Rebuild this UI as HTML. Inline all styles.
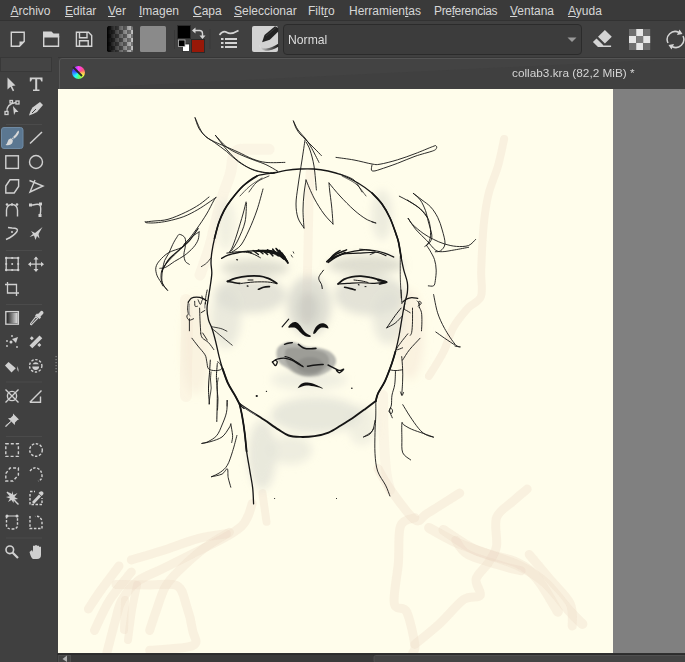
<!DOCTYPE html>
<html><head><meta charset="utf-8">
<style>
*{margin:0;padding:0;box-sizing:border-box}
html,body{width:685px;height:662px;overflow:hidden;background:#404040;font-family:"Liberation Sans",sans-serif}
.abs{position:absolute}
#menubar{left:0;top:0;width:685px;height:21px;background:#3a3a3a;border-bottom:1px solid #323232}
#menubar span{position:absolute;top:4px;font-size:12px;color:#d6d6d6;white-space:nowrap}
#menubar u{text-decoration:underline}
#toolbar{left:0;top:21px;width:685px;height:37px;background:#404040}
#toolbox{left:0;top:58px;width:57px;height:604px;background:#404040}
#tabbar{left:57px;top:58px;width:628px;height:31px;background:#404040}
#canvasbg{left:58px;top:89px;width:627px;height:564px;background:#808080}
#canvas{left:58px;top:89px;width:555px;height:564px;background:#fffdeb}
#bottom{left:57px;top:653px;width:628px;height:9px;background:#353535}
svg.draw{position:absolute;left:0;top:0}
#title{left:512px;top:66px;font-size:11.8px;color:#d4d4d4;white-space:nowrap}
#combo{left:288px;top:33px;font-size:12.2px;color:#dcdcdc}
#kicon{left:71.5px;top:65.5px;width:13px;height:13px;border-radius:50%;background:conic-gradient(from 0deg,#ff40ff,#ff5080 60deg,#ffff40 120deg,#60ff60 170deg,#20ffff 220deg,#4040ff 290deg,#ff40ff)}
</style></head><body>
<div id="menubar" class="abs">
<span style="left:10.5px"><u>A</u>rchivo</span>
<span style="left:65px"><u>E</u>ditar</span>
<span style="left:108px"><u>V</u>er</span>
<span style="left:139px"><u>I</u>magen</span>
<span style="left:193px"><u>C</u>apa</span>
<span style="left:234px"><u>S</u>eleccionar</span>
<span style="left:308px">Filt<u>r</u>o</span>
<span style="left:349px">Herramien<u>t</u>as</span>
<span style="left:434px;letter-spacing:-0.35px">Pre<u>f</u>erencias</span>
<span style="left:510px"><u>V</u>entana</span>
<span style="left:568px"><u>A</u>yuda</span>
</div>
<div id="toolbar" class="abs"></div>
<div id="toolbox" class="abs"></div>
<div id="tabbar" class="abs"></div>
<div id="canvasbg" class="abs"></div>
<div id="canvas" class="abs"></div>
<svg class="draw" width="685" height="662" viewBox="0 0 685 662">
<defs>
<clipPath id="cc"><rect x="58" y="89" width="555" height="564"/></clipPath>
<filter id="bl" x="-50%" y="-50%" width="200%" height="200%"><feGaussianBlur stdDeviation="4"/></filter>
<filter id="bl2" x="-50%" y="-50%" width="200%" height="200%"><feGaussianBlur stdDeviation="0.8"/></filter>
<filter id="bl3" x="-10%" y="-10%" width="120%" height="120%"><feGaussianBlur stdDeviation="0.7"/></filter>
<filter id="bl4" x="-20%" y="-20%" width="140%" height="140%"><feGaussianBlur stdDeviation="1.1"/></filter>
</defs>
<g clip-path="url(#cc)">
<g fill="none" stroke-linecap="round" stroke-linejoin="round" filter="url(#bl3)">
<path d="M252.2,503.4C251.5,505.5 249.8,512.2 248.0,516.0C246.2,519.8 245.8,522.4 241.7,526.1C237.6,529.8 231.5,533.8 223.3,538.4C215.1,543.0 202.8,548.6 192.6,553.7C182.4,558.8 171.2,564.4 162.0,569.0C152.8,573.6 144.1,576.2 137.4,581.3C130.8,586.4 125.7,593.6 122.1,599.7C118.5,605.8 118.5,609.2 116.0,618.1C113.5,627.0 108.3,647.2 106.8,653.0" stroke="#e9cfbf" stroke-width="9" opacity="0.26"/>
<path d="M131.3,559.9C136.4,558.4 150.8,554.3 162.0,550.7C173.2,547.1 188.1,541.2 198.8,538.4C209.5,535.6 221.7,534.6 226.3,533.8" stroke="#e9cfbf" stroke-width="9" opacity="0.26"/>
<path d="M119.0,566.0C116.0,570.1 105.8,583.4 100.7,590.5C95.6,597.6 90.5,605.8 88.4,608.9" stroke="#e9cfbf" stroke-width="9" opacity="0.26"/>
<path d="M131.3,572.1C127.7,576.7 116.0,590.0 109.9,599.7C103.8,609.4 97.1,625.3 94.5,630.4" stroke="#e9cfbf" stroke-width="9" opacity="0.26"/>
<path d="M125.0,600.0L124.0,630.0" stroke="#e9cfbf" stroke-width="8" opacity="0.26"/>
<path d="M116.0,584.4C121.7,584.5 139.8,584.8 150.0,585.0C160.2,585.2 171.2,582.4 177.3,585.9C183.4,589.4 183.9,598.4 186.5,605.8C189.1,613.2 191.6,623.8 192.6,630.4C193.6,637.0 199.8,642.4 192.6,645.7C185.4,649.0 156.8,649.5 149.7,650.3" stroke="#e9cfbf" stroke-width="9" opacity="0.26"/>
<path d="M229.4,532.3C225.3,534.8 213.6,541.0 204.9,547.6C196.2,554.2 184.0,565.5 177.3,572.1C170.7,578.7 168.6,580.8 165.0,587.4C161.4,594.0 158.4,604.8 155.8,612.0C153.2,619.2 150.7,627.3 149.7,630.4" stroke="#e9cfbf" stroke-width="9" opacity="0.26"/>
<path d="M137.0,585.0C136.2,589.2 133.5,600.8 132.0,610.0C130.5,619.2 128.7,635.0 128.0,640.0" stroke="#e9cfbf" stroke-width="8" opacity="0.26"/>
<path d="M262.4,493.1L266.5,521.8" stroke="#e9cfbf" stroke-width="8" opacity="0.26"/>
<path d="M378.0,468.6C380.0,472.0 384.1,480.6 390.2,489.1C396.3,497.6 408.7,515.6 414.8,519.7C420.9,523.8 419.5,518.0 427.0,513.6C434.5,509.2 454.2,496.5 459.7,493.1" stroke="#e9cfbf" stroke-width="9" opacity="0.26"/>
<path d="M414.8,517.7C412.4,519.1 403.2,518.4 400.5,525.9C397.8,533.4 399.4,549.8 398.4,562.7C397.4,575.6 392.9,595.3 394.3,603.5C395.7,611.7 403.2,604.9 406.6,611.7C410.0,618.5 413.8,637.5 414.8,644.4C415.8,651.3 413.1,651.6 412.7,653.0" stroke="#e9cfbf" stroke-width="9" opacity="0.26"/>
<path d="M414.8,644.4C418.9,641.0 431.1,631.5 439.3,624.0C447.5,616.5 457.0,604.2 463.8,599.4C470.6,594.6 478.1,598.8 480.2,595.4C482.2,592.0 474.7,584.5 476.1,579.0C477.5,573.5 485.0,568.2 488.4,562.7C491.8,557.2 495.1,553.8 496.5,546.3C497.9,538.8 493.8,525.2 496.5,517.7C499.2,510.2 507.8,506.1 512.9,501.3C518.0,496.5 524.8,491.1 527.2,489.1" stroke="#e9cfbf" stroke-width="9" opacity="0.26"/>
<path d="M429.1,527.9C433.5,530.3 445.8,537.8 455.7,542.2C465.6,546.6 477.5,550.4 488.4,554.5C499.3,558.6 511.6,561.9 521.1,566.7C530.6,571.5 537.4,575.6 545.6,583.1C553.8,590.6 564.0,604.9 570.1,611.7C576.2,618.5 580.4,622.0 582.4,624.0" stroke="#e9cfbf" stroke-width="10" opacity="0.26"/>
<path d="M443.4,530.0C448.8,533.4 463.8,544.9 476.1,550.4C488.4,555.9 506.8,557.9 517.0,562.7C527.2,567.5 530.6,570.8 537.4,579.0C544.2,587.2 554.5,606.2 557.9,611.7" stroke="#e9cfbf" stroke-width="10" opacity="0.26"/>
<path d="M529.2,554.5C532.6,558.6 542.9,570.8 549.7,579.0C556.5,587.2 566.4,595.7 570.1,603.5C573.9,611.3 571.9,622.2 572.2,626.0" stroke="#e9cfbf" stroke-width="9" opacity="0.26"/>
<path d="M455.7,540.2C457.7,542.6 459.7,550.1 467.9,554.5C476.1,558.9 495.8,564.0 504.7,566.7C513.6,569.4 518.4,570.1 521.1,570.8" stroke="#e9cfbf" stroke-width="9" opacity="0.26"/>
<path d="M269.1,149.3C266.3,149.3 257.8,148.9 252.2,149.3C246.6,149.7 238.9,147.8 235.3,151.8C231.7,155.8 232.6,165.8 230.4,173.5C228.2,181.2 224.4,189.6 222.0,197.7C219.6,205.8 217.9,213.8 215.9,221.8C213.9,229.9 212.6,237.1 209.9,246.0C207.2,254.9 201.7,270.2 200.0,275.0" stroke="#e9cfbf" stroke-width="11" opacity="0.16"/>
<path d="M186.0,300.0C186.2,305.0 187.0,318.3 187.0,330.0C187.0,341.7 186.2,359.0 186.0,370.0C185.8,381.0 186.0,391.7 186.0,396.0" stroke="#e9cfbf" stroke-width="12" opacity="0.14"/>
<path d="M310.2,172.0C310.0,176.7 309.4,187.0 309.0,200.0C308.6,213.0 308.3,235.0 308.0,250.0C307.7,265.0 307.3,278.3 307.0,290.0C306.7,301.7 306.2,315.0 306.0,320.0" stroke="#e9cfbf" stroke-width="9" opacity="0.18"/>
<path d="M504.1,139.0C503.1,143.4 500.7,156.3 498.1,165.6C495.5,174.9 490.8,184.5 488.4,194.6C486.0,204.7 484.8,213.4 483.6,226.0C482.4,238.6 481.6,258.3 481.2,270.0C480.8,281.7 483.2,289.9 481.0,296.3C478.8,302.7 472.3,303.1 467.7,308.3C463.1,313.5 457.2,320.4 453.2,327.7C449.2,334.9 447.5,343.8 443.5,351.8C439.5,359.9 431.4,372.0 429.0,376.0" stroke="#e9cfbf" stroke-width="8" opacity="0.26"/>
<path d="M383.0,395.0C383.1,400.8 383.0,417.5 383.5,430.0C384.0,442.5 384.9,460.0 386.0,470.0C387.1,480.0 389.3,486.7 390.0,490.0" stroke="#e9cfbf" stroke-width="10" opacity="0.16"/>
</g>
<g>
<g filter="url(#bl)">
<ellipse cx="410" cy="335" rx="14" ry="45" fill="#f0ddc8" opacity="0.35"/>
<ellipse cx="196" cy="345" rx="14" ry="50" fill="#f0ddc8" opacity="0.3"/>
<ellipse cx="255" cy="268" rx="34" ry="9" fill="#c9c9c0" opacity="0.6"/>
<ellipse cx="366" cy="265" rx="38" ry="10" fill="#c9c9c0" opacity="0.6"/>
<ellipse cx="250" cy="295" rx="36" ry="18" fill="#d6d6cc" opacity="0.65"/>
<ellipse cx="370" cy="295" rx="36" ry="20" fill="#d6d6cc" opacity="0.65"/>
<ellipse cx="226" cy="318" rx="15" ry="30" fill="#deded4" opacity="0.6"/>
<ellipse cx="388" cy="318" rx="15" ry="26" fill="#deded4" opacity="0.6"/>
<ellipse cx="309" cy="306" rx="22" ry="30" fill="#d3d3ca" opacity="0.7"/>
<ellipse cx="308" cy="308" rx="10" ry="16" fill="#c4c4bc" opacity="0.6"/>
<ellipse cx="316" cy="415" rx="45" ry="18" fill="#e2e2d7" opacity="0.8"/>
<ellipse cx="309" cy="380" rx="38" ry="10" fill="#e6e6da" opacity="0.6"/>
<ellipse cx="382" cy="215" rx="10" ry="25" fill="#deded4" opacity="0.55"/>
<ellipse cx="226" cy="225" rx="9" ry="25" fill="#e4e4d8" opacity="0.5"/>
<ellipse cx="262" cy="455" rx="14" ry="35" fill="#e0e0d5" opacity="0.7"/>
<ellipse cx="290" cy="450" rx="22" ry="14" fill="#e2e2d7" opacity="0.6"/>
<ellipse cx="362" cy="425" rx="14" ry="20" fill="#e4e4d8" opacity="0.5"/>
</g>
<g filter="url(#bl2)">
<ellipse cx="254" cy="281" rx="20" ry="3" fill="#f8f4e4" opacity="0.8"/>
<ellipse cx="362" cy="281" rx="20" ry="3" fill="#f8f4e4" opacity="0.8"/>
</g>
<g filter="url(#bl4)">
<path d="M276.6,355.9C276.2,353.5 276.4,350.6 277.3,348.7C278.2,346.8 279.9,345.5 282.1,344.4C284.3,343.3 287.7,342.1 290.5,342.0C293.3,341.9 296.4,343.0 299.0,343.8C301.6,344.6 303.5,346.3 306.3,346.9C309.1,347.5 312.9,347.1 315.9,347.5C318.9,347.9 321.8,348.4 324.4,349.3C327.0,350.2 329.7,351.3 331.6,352.9C333.5,354.5 335.4,356.8 335.9,358.9C336.4,361.0 336.0,363.5 334.7,365.6C333.4,367.7 330.7,369.9 328.0,371.6C325.3,373.3 321.9,375.1 318.3,375.9C314.7,376.7 310.1,376.9 306.3,376.5C302.5,376.1 298.6,374.8 295.4,373.4C292.2,372.0 289.5,369.7 286.9,368.0C284.3,366.3 281.4,365.2 279.7,363.2C278.0,361.2 277.0,358.3 276.6,355.9Z" fill="#b6b6af"/>
<path d="M285.7,349.9C287.1,347.7 290.8,347.7 294.2,347.5C297.6,347.3 302.3,348.2 306.3,348.7C310.3,349.2 315.1,349.7 318.3,350.5C321.5,351.3 323.8,352.0 325.6,353.5C327.4,355.0 329.0,357.3 329.2,359.5C329.4,361.7 328.6,364.5 326.8,366.8C325.0,369.1 321.5,371.9 318.3,373.4C315.1,374.9 310.9,375.9 307.5,375.9C304.1,375.9 300.6,374.7 297.8,373.4C295.0,372.1 292.5,370.1 290.5,368.0C288.5,365.9 286.5,363.8 285.7,360.8C284.9,357.8 284.3,352.1 285.7,349.9Z" fill="#9d9d97"/>
<ellipse cx="310" cy="365" rx="13" ry="8" fill="#8f8f8a"/>
</g>

</g>
<g fill="none" stroke="#151515" stroke-linecap="round" stroke-linejoin="round">
<path d="M195.1,117.8C195.7,119.5 197.0,124.9 198.8,128.1C200.6,131.3 203.4,134.5 206.1,136.8C208.8,139.1 211.7,140.3 214.8,141.9C218.0,143.5 221.1,144.6 225.0,146.3C228.9,148.0 233.6,150.0 238.2,152.1C242.8,154.2 248.2,157.3 252.8,159.0C257.4,160.7 260.5,161.8 265.9,162.4C271.2,163.0 281.7,162.4 284.9,162.4" stroke-width="0.9"/>
<path d="M195.1,117.8C196.4,120.5 199.8,129.8 203.1,133.9C206.4,138.1 210.9,139.8 214.8,142.7C218.7,145.6 222.6,148.2 226.5,151.4C230.4,154.6 234.1,158.7 238.2,161.6C242.3,164.5 246.7,167.1 251.3,168.9C255.9,170.7 261.5,172.1 265.9,172.6C270.3,173.1 275.7,172.2 277.6,172.1" stroke-width="0.9"/>
<path d="M215.5,135.4C217.3,137.3 222.5,143.8 226.5,147.0C230.5,150.2 235.0,152.1 239.6,154.3C244.2,156.5 249.8,158.5 254.2,160.2C258.6,161.9 262.0,162.8 265.9,164.6C269.8,166.4 275.7,170.0 277.6,171.1" stroke-width="0.9"/>
<path d="M215.5,135.4C216.6,136.8 219.5,140.9 222.1,144.1C224.7,147.2 227.7,151.1 230.9,154.3C234.1,157.5 237.2,160.4 241.1,163.1C245.0,165.8 249.6,168.7 254.2,170.4C258.8,172.1 266.4,172.8 268.8,173.3" stroke-width="0.9"/>
<path d="M145.3,221.9C146.8,221.8 150.2,221.4 154.0,221.0C157.8,220.6 162.8,220.8 168.0,219.3C173.2,217.9 180.2,214.8 185.5,212.3C190.8,209.8 195.7,207.0 199.6,204.4C203.5,201.8 207.4,198.2 209.0,197.0" stroke-width="0.9"/>
<path d="M145.3,221.9C145.6,222.1 145.2,222.7 147.0,222.8C148.8,223.0 152.3,223.1 155.8,222.8C159.3,222.5 163.3,222.0 168.0,221.0C172.7,220.0 178.8,218.5 183.8,216.6C188.8,214.7 193.8,211.9 197.8,209.6C201.8,207.3 205.0,205.0 208.0,203.0C211.0,201.0 214.7,198.3 216.0,197.4" stroke-width="0.9"/>
<path d="M216.0,197.4C215.6,198.0 215.2,198.1 213.6,200.9C212.0,203.7 209.5,209.2 206.6,214.0C203.7,218.8 199.8,224.6 196.0,229.8C192.2,235.1 187.9,240.8 183.8,245.5C179.7,250.2 175.0,254.0 171.5,257.8C168.0,261.6 164.6,265.1 162.8,268.3C161.1,271.5 161.0,274.5 161.0,277.1C161.0,279.7 161.8,281.9 162.8,284.1C163.8,286.3 166.5,289.2 167.2,290.2" stroke-width="0.9"/>
<path d="M189.3,264.3C188.7,263.8 186.3,263.0 185.4,261.4C184.5,259.8 183.9,257.1 183.9,254.5C183.9,251.9 185.2,248.5 185.4,245.7C185.6,242.9 185.9,239.7 184.9,237.8C183.9,235.9 180.9,234.4 179.5,234.4C178.1,234.4 177.7,236.1 176.5,237.8C175.3,239.5 173.9,242.1 172.6,244.7C171.3,247.3 170.0,250.9 168.7,253.5C167.4,256.1 165.7,257.9 164.7,260.4C163.7,262.9 163.3,265.5 162.8,268.3C162.3,271.1 161.8,274.5 161.8,277.1C161.8,279.7 161.8,281.8 162.8,284.0C163.8,286.2 166.9,289.3 167.7,290.4" stroke-width="0.9"/>
<path d="M199.1,231.9C198.9,233.2 199.1,237.2 198.1,239.8C197.1,242.4 195.5,245.0 193.2,247.6C190.9,250.2 187.5,253.2 184.4,255.5C181.3,257.8 177.7,259.4 174.6,261.4C171.5,263.4 168.2,266.1 165.7,267.3C163.2,268.5 160.8,268.1 159.8,268.3" stroke-width="0.9"/>
<path d="M198.1,228.5C196.6,230.6 192.4,237.3 189.3,240.8C186.2,244.3 182.8,246.7 179.5,249.6C176.2,252.5 172.2,255.6 169.6,258.5C167.0,261.4 165.1,265.1 163.8,267.3C162.5,269.6 162.3,271.2 162.0,272.0" stroke-width="1.2"/>
<path d="M199.1,231.9C198.1,232.6 195.3,234.2 193.0,236.0C190.7,237.8 186.9,241.1 185.0,243.0C183.1,244.9 184.1,246.0 181.4,247.6C178.7,249.2 172.3,250.5 168.7,252.6C165.1,254.7 161.9,257.9 159.8,260.4C157.7,262.8 156.4,264.8 155.9,267.3C155.4,269.8 156.1,272.8 156.9,275.2C157.7,277.6 159.8,280.2 160.8,282.0C161.8,283.8 162.6,285.3 163.0,286.0" stroke-width="0.9"/>
<path d="M274.0,173.0C271.2,173.5 262.2,173.8 257.0,176.0C251.8,178.2 247.3,182.0 243.0,186.0C238.7,190.0 234.2,195.9 231.0,200.0C227.8,204.1 226.1,206.7 224.1,210.5C222.1,214.3 220.4,218.1 218.8,222.8C217.2,227.5 215.7,233.5 214.5,238.5C213.3,243.5 212.4,248.5 211.8,252.6C211.2,256.7 211.0,259.6 211.0,263.1C211.0,266.6 212.0,269.5 211.8,273.6C211.6,277.7 210.6,283.5 210.0,287.6C209.4,291.7 208.8,294.5 208.3,298.1C207.8,301.7 207.0,305.4 207.0,309.0C207.0,312.6 207.7,316.6 208.5,319.8C209.3,323.1 210.8,325.0 212.0,328.5C213.2,332.0 214.3,336.1 215.5,340.8C216.7,345.5 217.9,351.9 219.1,356.6C220.3,361.3 221.1,364.4 222.6,368.8C224.1,373.2 225.8,378.5 227.8,382.9C229.8,387.3 232.8,391.6 234.8,395.1C236.8,398.6 238.8,402.5 239.6,404.0" stroke-width="1.3"/>
<path d="M274.0,173.0C276.0,172.6 281.7,171.1 286.0,170.4C290.3,169.7 295.3,169.2 300.0,169.0C304.7,168.8 309.3,168.7 314.0,169.0C318.7,169.3 323.3,170.0 328.0,171.0C332.7,172.0 337.0,173.0 342.0,175.0C347.0,177.0 353.0,180.0 358.0,183.0C363.0,186.0 368.0,189.5 372.0,193.0C376.0,196.5 379.0,199.8 382.0,204.0C385.0,208.2 387.7,213.0 390.0,218.0C392.3,223.0 394.6,230.0 396.0,234.0C397.4,238.0 397.6,238.0 398.5,242.0C399.4,246.0 400.3,253.1 401.2,257.8C402.1,262.5 402.8,266.0 403.8,270.1C404.8,274.2 406.7,278.5 407.3,282.3C407.9,286.1 407.7,289.4 407.3,292.9C406.9,296.4 405.6,298.9 404.7,303.4C403.8,307.9 402.6,314.4 401.7,319.8C400.8,325.2 400.1,330.2 399.1,335.5C398.1,340.8 396.8,346.3 395.5,351.3C394.2,356.3 392.9,360.3 391.2,365.3C389.4,370.3 387.2,376.4 385.0,381.1C382.8,385.8 379.5,390.1 378.0,393.4C376.5,396.7 376.2,399.7 375.8,401.0" stroke-width="1.3"/>
<path d="M269.0,176.0C267.0,177.0 260.3,179.3 257.0,182.0C253.7,184.7 250.3,190.3 249.0,192.0" stroke-width="0.8"/>
<path d="M257.0,176.0C254.7,177.7 247.3,182.0 243.0,186.0C238.7,190.0 234.2,195.9 231.0,200.0C227.8,204.1 226.1,206.7 224.1,210.5C222.1,214.3 220.4,218.1 218.8,222.8C217.2,227.5 215.2,235.9 214.5,238.5" stroke-width="1.7"/>
<path d="M372.0,193.0C373.7,194.8 379.0,199.8 382.0,204.0C385.0,208.2 387.7,213.0 390.0,218.0C392.3,223.0 394.6,230.0 396.0,234.0C397.4,238.0 397.6,238.0 398.5,242.0C399.4,246.0 400.8,255.2 401.2,257.8" stroke-width="1.7"/>
<path d="M262.0,178.0C260.0,179.3 253.7,183.0 250.0,186.0C246.3,189.0 241.7,194.3 240.0,196.0" stroke-width="0.7"/>
<path d="M340.0,174.0C342.3,175.0 350.3,177.0 354.0,180.0C357.7,183.0 360.7,190.0 362.0,192.0" stroke-width="0.8"/>
<path d="M342.0,176.0C344.3,177.3 352.0,180.7 356.0,184.0C360.0,187.3 364.3,194.0 366.0,196.0" stroke-width="0.7"/>
<path d="M400.3,256.0C400.3,259.5 400.2,270.1 400.3,277.1C400.4,284.1 401.1,294.6 401.2,298.1" stroke-width="0.8"/>
<path d="M246.0,202.0C245.5,204.0 244.5,208.7 243.0,214.0C241.5,219.3 238.8,228.3 237.0,234.0C235.2,239.7 233.3,245.0 232.0,248.0C230.7,251.0 229.5,251.3 229.0,252.0" stroke-width="0.9"/>
<path d="M246.5,203.0C246.2,206.2 246.4,215.8 245.0,222.0C243.6,228.2 240.2,235.3 238.0,240.0C235.8,244.7 233.3,248.0 232.0,250.0C230.7,252.0 230.3,251.7 230.0,252.0" stroke-width="0.9"/>
<path d="M263.0,189.0C262.0,192.5 259.3,203.2 257.0,210.0C254.7,216.8 251.7,224.2 249.0,230.0C246.3,235.8 243.8,241.3 241.0,245.0C238.2,248.7 233.5,250.8 232.0,252.0" stroke-width="0.9"/>
<path d="M201.3,266.6C202.2,266.0 205.0,264.6 206.6,263.1C208.2,261.6 210.3,258.7 211.0,257.8" stroke-width="0.8"/>
<path d="M293.4,121.0C293.8,122.2 294.9,125.8 296.0,128.0C297.1,130.2 298.3,132.0 300.0,134.0C301.7,136.0 303.7,137.7 306.0,140.0C308.3,142.3 311.4,145.4 314.0,148.0C316.6,150.6 320.2,154.3 321.4,155.6" stroke-width="0.9"/>
<path d="M293.4,121.0C294.2,122.5 296.1,127.2 298.0,130.0C299.9,132.8 302.8,135.2 305.0,138.0C307.2,140.8 308.7,142.9 311.0,147.0C313.3,151.1 317.7,159.8 319.0,162.4" stroke-width="0.9"/>
<path d="M305.0,140.0C304.5,143.3 303.2,152.3 302.0,160.0C300.8,167.7 299.0,178.7 298.0,186.0C297.0,193.3 296.0,198.7 296.0,204.0C296.0,209.3 296.7,214.0 298.0,218.0C299.3,222.0 303.0,226.3 304.0,228.0" stroke-width="0.9"/>
<path d="M306.0,142.0C306.7,143.3 308.7,146.0 310.0,150.0C311.3,154.0 312.9,159.3 314.0,166.0C315.1,172.7 316.0,186.0 316.4,190.0" stroke-width="0.9"/>
<path d="M304.0,228.0C303.8,225.0 303.0,215.7 303.0,210.0C303.0,204.3 303.5,199.0 304.0,194.0C304.5,189.0 305.7,182.3 306.0,180.0" stroke-width="0.9"/>
<path d="M306.0,180.0C307.3,183.0 311.0,192.3 314.0,198.0C317.0,203.7 320.8,209.7 324.0,214.0C327.2,218.3 331.5,222.3 333.0,224.0" stroke-width="0.9"/>
<path d="M333.0,224.0C332.8,221.0 332.2,211.7 331.6,206.0C331.0,200.3 330.0,193.8 329.6,190.0C329.2,186.2 329.1,184.2 329.0,183.0" stroke-width="0.9"/>
<path d="M329.0,183.0C330.8,185.2 335.8,191.5 340.0,196.0C344.2,200.5 349.7,206.2 354.0,210.0C358.3,213.8 362.3,216.8 366.0,219.0C369.7,221.2 375.0,222.5 376.0,223.0C377.0,223.5 372.7,222.2 372.0,222.0" stroke-width="0.9"/>
<path d="M336.0,157.4C339.0,157.8 348.0,158.9 354.0,160.0C360.0,161.1 367.7,163.3 372.0,164.0C376.3,164.7 375.8,164.9 380.0,164.2C384.2,163.5 391.7,161.6 397.5,159.8C403.3,158.1 409.1,155.9 415.0,153.7C420.9,151.5 429.1,147.9 432.6,146.6C436.1,145.3 435.4,145.5 436.0,145.8C436.6,146.1 437.0,147.5 436.4,148.4C435.8,149.3 436.2,149.7 432.6,151.0C429.0,152.3 420.9,154.2 415.0,156.3C409.1,158.4 403.3,161.1 397.5,163.3C391.7,165.5 383.9,168.1 380.0,169.4C376.1,170.7 375.4,170.9 374.0,171.0C372.6,171.1 371.7,171.0 371.4,170.0C371.1,169.0 371.9,165.8 372.0,165.0" stroke-width="0.9"/>
<path d="M407.3,200.0C409.1,201.2 414.6,204.4 417.8,207.0C421.0,209.6 424.6,212.6 426.6,215.8C428.7,219.0 429.5,222.5 430.1,226.3C430.7,230.1 430.7,235.3 430.1,238.5C429.5,241.7 427.2,244.3 426.6,245.5" stroke-width="0.9"/>
<path d="M413.3,193.4C414.5,194.5 418.3,197.1 420.3,200.0C422.3,202.9 424.2,207.1 425.5,210.6C426.8,214.1 427.1,217.0 428.2,221.1C429.2,225.2 431.5,231.5 431.8,235.0C432.1,238.5 431.3,240.1 430.1,242.0C428.9,243.9 425.7,245.7 424.8,246.4" stroke-width="0.9"/>
<path d="M413.3,193.4C414.8,194.5 419.1,197.7 422.0,200.0C424.9,202.3 428.2,204.2 430.8,207.1C433.4,210.0 435.9,213.8 437.8,217.6C439.7,221.4 441.0,225.5 442.2,229.9C443.4,234.3 445.3,240.3 445.0,243.8C444.7,247.3 442.2,249.5 440.6,250.8C439.0,252.1 436.2,251.5 435.3,251.7" stroke-width="0.9"/>
<path d="M399.3,196.2C401.1,197.1 406.3,199.7 409.8,201.8C413.3,203.9 417.4,206.2 420.3,208.8C423.2,211.4 426.1,216.1 427.3,217.6" stroke-width="0.9"/>
<path d="M408.2,218.4C408.9,219.4 410.1,222.0 412.6,224.5C415.1,227.0 419.6,230.8 423.1,233.3C426.6,235.8 430.1,237.7 433.6,239.4C437.1,241.2 440.3,242.6 444.1,243.8C447.9,245.0 452.3,246.1 456.4,246.4C460.5,246.7 465.4,246.7 468.6,245.5C471.8,244.3 474.4,240.4 475.6,239.4" stroke-width="0.9"/>
<path d="M408.2,218.4C409.5,220.3 413.0,226.2 416.1,229.8C419.2,233.5 423.4,237.0 426.6,240.3C429.8,243.7 432.7,248.0 435.3,249.9C437.9,251.8 439.1,251.7 442.3,251.7C445.5,251.7 450.2,250.6 454.6,249.9C459.0,249.2 466.3,247.7 468.6,247.3" stroke-width="0.9"/>
<path d="M426.6,245.5C427.2,246.4 428.8,248.5 430.1,250.8C431.4,253.2 433.5,256.4 434.5,259.6C435.5,262.8 436.1,266.6 436.2,270.1C436.3,273.6 435.7,278.0 435.3,280.6C434.9,283.2 434.8,284.9 433.6,285.8C432.4,286.7 429.2,285.8 428.3,285.8" stroke-width="0.9"/>
<path d="M433.6,294.6C434.3,297.6 435.8,307.2 437.6,312.8C439.4,318.4 441.7,323.2 444.6,328.5C447.5,333.8 452.5,341.2 455.1,344.3C457.7,347.4 460.4,346.6 460.4,346.9C460.4,347.2 456.0,346.2 455.1,346.1" stroke-width="0.9"/>
<path d="M435.8,332.0C437.3,333.0 441.4,336.0 444.6,338.2C447.8,340.4 453.4,344.0 455.1,345.2" stroke-width="0.9"/>
<path d="M221.6,258.4C222.7,257.8 225.3,256.1 228.1,255.1C230.9,254.1 235.1,253.2 238.6,252.5C242.1,251.8 245.7,251.5 249.2,251.2C252.7,250.9 256.6,250.6 259.7,250.5C262.8,250.4 265.0,250.3 267.6,250.5C270.2,250.7 272.8,250.9 275.4,251.8C278.0,252.7 281.2,254.1 283.3,255.8C285.4,257.6 287.1,261.2 287.9,262.3" stroke-width="1.3"/>
<path d="M226.8,253.1C228.6,252.9 233.8,251.9 237.3,251.8C240.8,251.7 245.0,252.1 247.8,252.5C250.7,252.9 252.3,253.6 254.4,254.5C256.5,255.4 259.3,257.2 260.3,257.7" stroke-width="1.0"/>
<path d="M263.0,250.5L267.6,254.5" stroke-width="1.6"/>
<path d="M267.6,249.9L272.8,255.8" stroke-width="1.6"/>
<path d="M272.8,249.2L278.1,255.8" stroke-width="1.6"/>
<path d="M276.1,248.5L283.3,258.4" stroke-width="1.6"/>
<path d="M279.4,250.5L286.6,261.0" stroke-width="1.8"/>
<path d="M282.0,253.1L287.9,263.0" stroke-width="1.8"/>
<path d="M270.0,251.0C271.0,251.3 274.0,252.2 276.0,253.0C278.0,253.8 280.3,254.8 282.0,256.0C283.7,257.2 285.3,259.3 286.0,260.0" stroke-width="2.2"/>
<path d="M264.0,251.5C265.3,251.8 269.5,252.3 272.0,253.0C274.5,253.7 277.0,254.5 279.0,255.5C281.0,256.5 283.2,258.4 284.0,259.0" stroke-width="1.8"/>
<path d="M277.0,249.5C277.7,250.1 279.7,251.8 281.0,253.0C282.3,254.2 284.3,256.3 285.0,257.0" stroke-width="1.5"/>
<path d="M291.2,255.1L292.5,257.1" stroke-width="0.8"/>
<path d="M247.8,251.2L251.8,253.1" stroke-width="1.2"/>
<path d="M253.1,250.5L258.4,254.5" stroke-width="1.3"/>
<path d="M258.4,249.9L263.0,253.8" stroke-width="1.4"/>
<path d="M256.0,251.0C257.7,251.1 263.0,251.2 266.0,251.5C269.0,251.8 272.7,252.8 274.0,253.0" stroke-width="1.6"/>
<path d="M293.2,251.8L293.8,253.1" stroke-width="0.8"/>
<path d="M236.7,259.7L237.5,259.9" stroke-width="1.2"/>
<path d="M326.8,261.7C328.2,260.6 331.7,257.0 335.0,255.0C338.3,253.0 344.6,250.8 346.5,249.9" stroke-width="1.6"/>
<path d="M328.1,262.3C329.4,261.4 333.1,258.6 336.0,257.0C338.9,255.4 343.7,253.2 345.2,252.5" stroke-width="1.6"/>
<path d="M329.5,259.7C330.2,258.8 332.2,256.0 334.0,254.5C335.8,253.0 339.0,251.2 340.0,250.5" stroke-width="1.4"/>
<path d="M332.1,258.4C333.4,257.8 337.5,255.9 340.0,255.0C342.5,254.1 346.0,253.4 347.2,253.1" stroke-width="1.4"/>
<path d="M330.8,258.4C332.6,257.8 337.4,255.7 341.3,254.5C345.2,253.3 350.5,252.0 354.4,251.2C358.3,250.4 361.6,250.0 364.9,249.9C368.2,249.8 370.8,250.0 374.1,250.5C377.4,251.0 381.3,252.0 384.6,253.1C387.9,254.2 392.3,256.4 393.8,257.1" stroke-width="1.2"/>
<path d="M345.2,253.8C347.4,253.7 354.2,253.3 358.4,253.1C362.6,252.9 366.9,252.6 370.2,252.5C373.5,252.4 375.5,251.9 378.1,252.5C380.7,253.1 384.7,255.2 386.0,255.8" stroke-width="1.1"/>
<path d="M359.7,249.2C361.0,249.3 365.0,249.5 367.6,249.9C370.2,250.3 375.0,251.0 375.4,251.8C375.8,252.6 371.1,254.1 370.2,254.5" stroke-width="1.0"/>
<path d="M227.5,281.4C228.9,280.8 232.6,279.0 236.0,278.1C239.4,277.2 243.9,276.4 247.8,276.1C251.8,275.8 256.4,275.8 259.7,276.1C263.0,276.4 265.4,277.3 267.6,278.1C269.8,278.9 271.3,279.8 272.8,280.7C274.3,281.6 276.1,282.9 276.8,283.4" stroke-width="1.8"/>
<path d="M227.5,281.4C228.7,281.6 232.6,282.4 234.7,282.7C236.8,283.0 239.1,283.3 240.0,283.4" stroke-width="1.6"/>
<path d="M241.3,283.4C243.5,283.2 250.0,282.2 254.4,282.0C258.8,281.8 264.0,281.8 267.6,282.0C271.2,282.2 274.7,283.2 276.1,283.4" stroke-width="1.0"/>
<path d="M248.0,280.0L253.0,280.0" stroke-width="1.0"/>
<path d="M258.4,289.3C259.3,289.0 261.8,287.8 263.6,287.3C265.5,286.9 268.5,286.7 269.5,286.6" stroke-width="1.6"/>
<path d="M247.2,286.0L248.0,286.2" stroke-width="1.3"/>
<path d="M338.0,284.0C339.0,283.2 341.6,280.6 343.9,279.4C346.2,278.2 348.9,277.4 351.8,276.8C354.7,276.2 357.9,276.0 361.0,276.1C364.1,276.2 367.3,276.8 370.2,277.4C373.1,277.9 375.4,278.6 378.1,279.4C380.8,280.2 385.2,281.6 386.6,282.0" stroke-width="1.8"/>
<path d="M338.0,284.0C339.6,283.9 344.0,283.6 347.8,283.4C351.6,283.2 356.8,282.7 361.0,282.7C365.2,282.7 368.6,283.5 372.8,283.4C377.0,283.3 383.8,282.2 386.0,282.0" stroke-width="1.1"/>
<path d="M378.0,280.5C379.4,280.8 386.4,281.4 386.6,282.0C386.9,282.6 380.7,283.7 379.5,284.0" stroke-width="1.6"/>
<path d="M354.0,280.0C355.3,280.2 359.7,280.6 362.0,281.0C364.3,281.4 367.0,282.2 368.0,282.5" stroke-width="1.0"/>
<path d="M344.6,287.3C345.6,287.5 348.8,288.2 350.5,288.6C352.2,289.0 354.3,289.7 355.1,289.9" stroke-width="1.6"/>
<path d="M358.4,284.7L359.0,284.8" stroke-width="1.2"/>
<path d="M365.0,286.6L366.0,286.6" stroke-width="1.0"/>
<path d="M323.5,270.2C322.9,271.1 320.4,274.0 319.6,275.5C318.8,277.0 318.6,277.9 318.9,279.4C319.2,280.9 321.1,283.2 321.6,284.7C322.2,286.2 322.1,288.0 322.2,288.6" stroke-width="1.0"/>
<path d="M282.1,326.9L288.7,319.1" stroke-width="1.1"/>
<path d="M284.5,344.4C285.1,344.2 286.8,343.5 288.1,343.2C289.4,342.9 291.7,342.7 292.4,342.6" stroke-width="1.4"/>
<path d="M298.4,344.4C299.1,344.9 301.3,346.8 302.6,347.5C303.9,348.2 304.9,348.5 306.3,348.7C307.7,348.9 309.5,348.8 311.1,348.7C312.7,348.6 315.1,348.4 315.9,348.4" stroke-width="1.6"/>
<path d="M272.4,362.0C273.0,361.6 274.6,360.1 276.0,359.5C277.4,358.9 279.3,358.5 280.9,358.3C282.5,358.1 283.9,358.0 285.7,358.3C287.5,358.6 289.6,359.2 291.8,360.2C294.0,361.2 297.1,363.3 299.0,364.4C300.9,365.5 302.5,366.4 303.2,366.8" stroke-width="1.3"/>
<path d="M285.0,356.5C285.9,356.8 288.6,357.4 290.5,358.3C292.4,359.2 294.6,360.7 296.6,362.0C298.6,363.3 301.6,365.5 302.6,366.2" stroke-width="1.1"/>
<path d="M272.4,362.0C272.9,362.6 274.6,365.6 275.4,365.6C276.2,365.6 277.3,362.9 277.3,362.0C277.3,361.1 275.7,360.5 275.4,360.2" stroke-width="1.3"/>
<path d="M307.5,366.2C308.9,366.0 313.3,365.3 315.9,365.0C318.5,364.7 322.0,364.5 323.2,364.4" stroke-width="1.5"/>
<path d="M328.0,365.0C328.8,365.4 331.0,366.5 332.8,367.4C334.6,368.3 337.1,370.1 338.9,370.4C340.7,370.7 343.6,368.8 343.7,369.2C343.8,369.6 340.7,372.6 339.5,372.8C338.3,373.0 337.0,370.8 336.5,370.4" stroke-width="1.4"/>
<path d="M239.6,404.0C241.3,405.2 246.0,408.4 250.1,411.0C254.2,413.6 259.4,416.7 264.1,419.8C268.8,422.9 274.0,426.8 278.1,429.4C282.2,432.0 284.9,434.2 288.6,435.5C292.3,436.8 296.2,436.8 300.5,436.9C304.8,437.0 309.8,436.8 314.5,436.1C319.2,435.4 324.1,434.4 328.5,432.6C332.9,430.8 336.7,428.0 340.8,425.5C344.9,423.0 349.0,420.5 353.1,417.7C357.2,414.9 361.5,411.7 365.3,408.9C369.1,406.1 374.1,402.3 375.8,401.0" stroke-width="1.9"/>
<path d="M222.6,368.8C223.5,371.1 225.8,378.5 227.8,382.9C229.8,387.3 232.8,391.6 234.8,395.1C236.8,398.6 238.1,401.9 239.6,404.0C241.1,406.1 243.3,407.3 244.0,408.0" stroke-width="1.9"/>
<path d="M242.0,406.0C243.5,407.0 248.7,410.5 251.0,412.0C253.3,413.5 255.2,414.5 256.0,415.0" stroke-width="0.8" stroke="#888"/>
<path d="M239.6,404.0C240.0,406.1 241.3,411.3 242.2,416.3C243.1,421.3 244.1,428.0 244.8,433.8C245.5,439.6 245.7,444.9 246.6,451.3C247.5,457.7 249.1,466.2 250.1,472.3C251.1,478.4 252.1,482.8 252.7,488.1C253.3,493.4 253.4,501.3 253.6,503.9" stroke-width="1.3"/>
<path d="M239.6,404.0C240.0,406.1 241.3,411.3 242.2,416.3C243.1,421.3 244.1,428.0 244.8,433.8C245.5,439.6 246.3,448.4 246.6,451.3" stroke-width="1.8"/>
<path d="M375.8,401.0C375.8,403.3 375.9,409.7 375.8,415.0C375.7,420.3 375.1,426.2 375.0,432.6C374.9,439.0 374.6,447.2 375.0,453.6C375.4,460.0 375.9,465.9 377.6,471.1C379.4,476.4 383.4,481.0 385.5,485.1C387.6,489.2 389.2,494.2 389.9,496.0" stroke-width="0.9"/>
<path d="M188.3,302.1C188.8,301.5 189.9,299.1 191.3,298.3C192.7,297.5 194.7,297.2 196.6,297.2C198.5,297.2 201.1,297.7 202.7,298.3C204.3,298.9 205.8,300.2 206.4,300.6" stroke-width="1.3"/>
<path d="M188.3,302.1C188.2,303.2 187.6,306.9 187.6,308.9C187.6,310.9 188.4,313.1 188.3,314.2C188.2,315.3 186.9,314.9 186.8,315.7C186.7,316.4 187.1,317.9 187.6,318.7C188.1,319.4 188.8,320.2 189.8,320.2C190.8,320.2 193.0,318.9 193.6,318.7" stroke-width="0.9"/>
<path d="M189.2,304.0C189.2,305.3 188.9,310.0 189.0,312.0C189.1,314.0 189.8,315.3 190.0,316.0" stroke-width="1.0" stroke="#777"/>
<path d="M189.4,318.7L189.4,330.8" stroke-width="0.9"/>
<path d="M194.7,301.3C194.8,302.1 194.6,305.4 195.1,306.2C195.6,307.0 197.0,306.2 197.4,306.2" stroke-width="0.9"/>
<path d="M198.1,299.8C198.5,300.6 199.8,304.3 200.4,304.4C201.0,304.5 201.7,301.2 201.9,300.6" stroke-width="0.9"/>
<path d="M201.9,296.0L202.7,299.8" stroke-width="0.9"/>
<path d="M199.6,308.1C199.7,310.1 199.8,315.9 200.0,320.2C200.2,324.5 200.7,331.5 200.8,333.8" stroke-width="0.9"/>
<path d="M201.1,312.7L204.9,310.4" stroke-width="0.9"/>
<path d="M204.9,302.8L204.9,308.1" stroke-width="0.9" stroke="#666"/>
<path d="M202.7,333.0L207.2,340.0" stroke-width="0.9"/>
<path d="M207.2,290.0C206.9,291.3 206.0,295.3 205.7,297.6C205.4,299.9 205.5,302.9 205.5,304.0" stroke-width="0.9"/>
<path d="M191.9,338.2C192.9,339.5 195.8,343.3 198.0,346.1C200.2,348.9 203.5,352.2 205.0,354.8C206.5,357.4 206.2,359.5 206.8,361.8C207.4,364.1 207.1,367.3 208.5,368.8C209.9,370.3 213.3,370.6 215.5,370.6C217.7,370.6 221.0,370.0 221.7,368.8C222.4,367.6 220.6,364.8 219.9,363.6C219.2,362.4 217.7,362.1 217.3,361.8" stroke-width="0.9"/>
<path d="M200.8,333.8C201.1,334.5 201.1,336.5 202.4,338.0C203.7,339.5 206.6,340.7 208.5,342.6C210.4,344.5 212.9,348.4 213.8,349.6" stroke-width="0.9"/>
<path d="M212.0,326.8C213.5,327.1 218.3,327.8 220.8,328.5C223.3,329.2 225.9,330.8 226.9,331.2" stroke-width="0.8"/>
<path d="M212.0,328.5C213.8,330.0 219.2,334.5 222.6,337.3C226.0,340.1 230.6,343.9 232.2,345.2" stroke-width="0.8"/>
<path d="M210.3,360.1C210.2,362.4 209.7,369.4 209.4,374.1C209.1,378.8 208.5,383.1 208.5,388.1C208.5,393.1 209.2,401.3 209.4,403.9" stroke-width="1.0"/>
<path d="M211.0,372.0C210.9,373.3 210.5,377.3 210.5,380.0C210.5,382.7 211.3,385.3 211.2,388.0C211.1,390.7 210.4,393.3 210.0,396.0C209.6,398.7 209.2,402.7 209.0,404.0" stroke-width="0.8"/>
<path d="M217.3,363.6C217.2,365.9 216.4,372.9 216.4,377.6C216.4,382.3 217.2,384.3 217.3,391.6C217.4,398.9 216.9,416.5 216.8,421.5" stroke-width="1.0"/>
<path d="M218.2,378.0C218.0,379.7 217.0,384.7 217.0,388.0C217.0,391.3 217.9,394.3 218.0,398.0C218.1,401.7 217.6,408.0 217.5,410.0" stroke-width="0.8"/>
<path d="M227.0,400.4L227.0,406.0" stroke-width="0.8"/>
<path d="M227.3,400.5C227.2,402.6 227.3,408.7 226.4,412.8C225.5,416.9 223.6,421.2 222.0,425.0C220.4,428.8 219.1,432.7 216.8,435.5C214.5,438.3 210.5,440.4 208.0,441.7C205.5,443.0 202.9,443.1 201.9,443.4" stroke-width="0.9"/>
<path d="M201.9,443.4C203.4,443.1 207.7,442.6 211.0,441.5C214.3,440.4 219.0,439.2 222.0,437.0C225.0,434.8 227.5,430.2 229.0,428.0C230.5,425.8 230.5,424.7 230.8,424.0" stroke-width="0.9"/>
<path d="M230.8,424.0C231.1,425.9 232.4,432.4 232.6,435.5C232.8,438.6 231.8,441.3 231.7,442.5" stroke-width="0.9"/>
<path d="M236.9,435.5C236.2,438.1 234.2,446.3 232.6,451.3C231.0,456.3 229.4,461.8 227.3,465.3C225.2,468.8 222.9,470.4 220.3,472.3C217.7,474.2 213.0,476.0 211.5,476.7" stroke-width="0.9"/>
<path d="M211.5,476.7C213.2,476.3 219.4,475.4 222.0,474.1C224.6,472.8 226.3,468.2 227.3,468.8C228.3,469.4 227.6,474.5 228.2,477.6C228.8,480.7 230.4,485.6 230.8,487.2" stroke-width="0.9"/>
<path d="M402.7,302.1C403.3,301.6 404.9,299.9 406.4,299.1C407.9,298.4 409.8,297.7 411.7,297.6C413.6,297.5 416.8,298.2 417.8,298.3" stroke-width="1.2"/>
<path d="M419.3,307.4C419.7,308.3 421.1,310.3 421.5,312.7C421.9,315.1 421.9,318.7 421.9,321.7C421.9,324.7 421.6,329.3 421.5,330.8" stroke-width="0.9"/>
<path d="M419.5,305.0C419.8,304.7 421.6,303.6 421.5,303.0C421.4,302.4 419.2,300.8 418.8,301.5C418.4,302.2 419.2,306.4 419.3,307.4" stroke-width="0.9"/>
<path d="M404.9,303.6C404.8,304.5 403.9,307.8 404.2,308.9C404.4,310.0 405.4,309.8 406.4,310.4C407.4,311.0 409.6,312.3 410.2,312.7" stroke-width="0.9"/>
<path d="M412.5,308.1C412.5,310.4 412.6,317.7 412.5,321.7C412.4,325.7 412.1,330.0 411.7,332.3C411.3,334.6 410.4,334.8 410.2,335.3" stroke-width="0.9"/>
<path d="M401.1,308.1C400.1,309.4 397.5,312.4 395.1,315.7C392.7,319.0 388.2,325.8 386.8,327.8" stroke-width="1.0"/>
<path d="M386.8,327.8C388.2,327.0 392.6,325.1 395.1,323.2C397.6,321.3 400.8,317.5 401.9,316.4" stroke-width="0.9"/>
<path d="M401.1,290.0C401.2,291.2 401.4,294.7 401.5,297.0C401.6,299.3 401.8,302.5 401.9,303.6" stroke-width="0.9"/>
<path d="M407.8,333.8C406.6,335.3 402.7,340.0 400.8,342.6C398.9,345.2 396.1,348.7 396.4,349.6C396.7,350.5 401.6,348.1 402.6,347.8" stroke-width="0.9"/>
<path d="M420.1,338.2C418.4,340.1 412.5,346.0 409.6,349.6C406.7,353.2 403.8,358.4 402.6,360.1" stroke-width="0.9"/>
<path d="M389.4,369.7C390.4,369.9 393.3,370.6 395.5,370.6C397.7,370.6 401.4,369.9 402.6,369.7" stroke-width="0.9"/>
<path d="M395.5,370.6C395.4,372.9 395.3,380.5 394.7,384.6C394.1,388.7 392.6,391.7 392.0,395.1C391.4,398.5 391.8,402.4 391.4,405.0C391.0,407.6 389.5,408.7 389.6,410.8C389.8,412.9 391.9,416.6 392.3,417.8" stroke-width="0.9"/>
<path d="M401.7,356.6C401.9,358.6 402.5,364.7 402.6,368.8C402.8,372.9 402.8,376.7 402.6,381.1C402.5,385.5 401.9,392.8 401.7,395.1" stroke-width="0.9"/>
<path d="M417.0,301.0C417.5,301.5 419.8,303.2 420.0,304.0C420.2,304.8 418.3,305.7 418.0,306.0" stroke-width="0.8"/>
<path d="M402.8,404.7C404.0,406.6 407.2,412.2 409.8,416.1C412.4,420.0 415.9,425.2 418.5,428.3C421.1,431.4 423.0,433.0 425.5,434.5C428.0,436.0 432.1,436.7 433.4,437.1" stroke-width="0.9"/>
<path d="M433.4,437.1C431.8,436.5 427.4,434.9 423.8,433.6C420.2,432.3 414.9,430.7 411.5,429.2C408.1,427.7 405.3,425.8 403.7,424.8C402.1,423.8 402.2,420.8 401.9,423.1C401.6,425.4 401.8,433.8 401.9,438.8C402.0,443.8 401.3,449.4 402.8,452.9C404.3,456.4 409.4,458.7 410.7,459.9" stroke-width="0.9"/>
<path d="M375.0,420.3C374.6,422.1 374.2,428.0 372.3,430.8C370.4,433.6 365.1,435.9 363.6,436.9" stroke-width="0.9"/>
<path d="M363.6,436.9C364.7,436.4 368.3,435.5 370.0,434.0C371.7,432.5 373.3,429.0 374.0,428.0" stroke-width="0.9"/>
<path d="M274.6,498.5l0.1,0" stroke-width="1.0"/>
<path d="M336.5,498.5l0.1,0" stroke-width="1.0"/>
<path d="M256.7,396.0l0.1,0" stroke-width="2.2"/>
<path d="M266.4,391.3l0.1,0" stroke-width="1.3"/>
<path d="M351.8,388.3l0.1,0" stroke-width="1.5"/>
<path d="M390.5,408.0C390.2,408.6 388.8,410.6 389.0,411.5C389.2,412.4 390.9,413.8 391.5,413.5C392.1,413.2 392.7,410.9 392.5,410.0C392.3,409.1 390.8,408.3 390.5,408.0" stroke-width="0.9"/>
<path d="M400.5,392.0C400.8,392.6 401.5,395.4 402.0,395.5C402.5,395.6 403.2,393.0 403.5,392.5" stroke-width="0.9"/>
<path d="M395.5,351.3C394.8,353.6 392.9,360.3 391.2,365.3C389.4,370.3 387.2,376.4 385.0,381.1C382.8,385.8 379.5,390.1 378.0,393.4C376.5,396.7 376.2,399.7 375.8,401.0" stroke-width="1.8"/>
<path d="M288.2,327.2C288.3,326.4 291.1,323.4 292.5,322.6C293.9,321.8 295.5,321.9 296.8,322.4C298.1,322.9 299.1,324.3 300.2,325.6C301.3,326.9 302.1,328.7 303.2,330.0C304.3,331.3 305.4,332.6 306.7,333.6C308.0,334.6 310.9,335.7 311.0,336.2C311.1,336.7 309.0,337.1 307.5,336.8C306.0,336.5 303.8,335.4 302.2,334.2C300.6,333.0 299.0,330.9 297.8,329.8C296.6,328.7 296.0,328.2 295.0,327.8C294.0,327.4 293.1,327.7 292.0,327.6C290.9,327.5 288.1,328.0 288.2,327.2Z" fill="#111" stroke="none"/>
<path d="M313.2,333.2C313.3,332.2 314.5,329.2 315.5,327.6C316.5,326.1 318.0,324.6 319.3,323.9C320.6,323.2 321.9,323.0 323.2,323.2C324.5,323.4 326.1,324.3 327.0,325.2C327.9,326.1 328.8,328.1 328.4,328.5C328.0,328.9 325.7,327.7 324.4,327.6C323.1,327.5 321.9,327.4 320.8,327.8C319.7,328.2 318.9,329.0 317.9,330.0C316.9,331.0 315.7,333.1 314.9,333.6C314.1,334.1 313.1,334.2 313.2,333.2Z" fill="#111" stroke="none"/>
<path d="M297.8,388.0C298.0,387.4 299.8,384.6 301.4,383.7C303.0,382.8 305.3,382.4 307.5,382.5C309.7,382.6 312.1,383.3 314.7,384.3C317.3,385.3 323.0,388.1 323.2,388.5C323.4,388.9 318.7,387.2 315.9,386.7C313.1,386.2 308.9,385.4 306.3,385.5C303.7,385.6 301.6,386.9 300.2,387.3C298.8,387.7 297.6,388.6 297.8,388.0Z" fill="#111" stroke="none"/>
</g>
</g>
</svg>
<div id="bottom" class="abs"></div>
<svg class="ui" width="685" height="662" viewBox="0 0 685 662" style="position:absolute;left:0;top:0">
<defs>
<pattern id="chk" width="8" height="8" patternUnits="userSpaceOnUse" x="107" y="26"><rect width="8" height="8" fill="#c4c4c4"/><rect width="4" height="4" fill="#7a7a7a"/><rect x="4" y="4" width="4" height="4" fill="#7a7a7a"/></pattern>
<linearGradient id="gblk" x1="0" x2="1" y1="0" y2="0"><stop offset="0" stop-color="#000"/><stop offset="1" stop-color="#000" stop-opacity="0"/></linearGradient>
<linearGradient id="ggr" x1="0" x2="1" y1="0" y2="0"><stop offset="0" stop-color="#2a2a2a"/><stop offset="1" stop-color="#e0e0e0"/></linearGradient>
<linearGradient id="swoosh" x1="0" x2="1" y1="0" y2="0"><stop offset="0" stop-color="#e8e8e8"/><stop offset="0.45" stop-color="#777"/><stop offset="1" stop-color="#1a1a1a"/></linearGradient>
</defs>
<!-- toolbar icons -->
<g fill="none" stroke="#d4d4d4" stroke-width="1.4">
<path d="M11.3,32.2H24.2V41.5L19.5,46.3H11.3Z"/>
<path d="M43.7,36.5V46.3H58.5V35.9"/>
<path d="M76.4,32.3H88.5L91.7,35.5V46.3H76.4Z M79.5,32.3V37.8H87V32.3 M79.5,46.3V40.8H88.2V46.3"/>
</g>
<path d="M24.2,41.5L19.5,46.3V41.5Z" fill="#d4d4d4"/>
<path d="M43,31.5H51.5L53.5,33.5H59.2V37.5H43Z" fill="#d4d4d4"/>
<rect x="107" y="26" width="26" height="26" rx="1.5" fill="url(#chk)"/>
<rect x="107" y="26" width="26" height="26" rx="1.5" fill="url(#gblk)"/>
<rect x="140" y="26" width="26" height="26" rx="1.5" fill="#8a8a8a"/>
<rect x="174" y="30" width="1" height="19" fill="#383838"/>
<rect x="177.5" y="25.5" width="13" height="13" fill="#000" stroke="#2a2a2a" stroke-width="1"/>
<rect x="191.5" y="39.5" width="13" height="13" fill="#971808" stroke="#2a2a2a" stroke-width="1"/>
<rect x="182.5" y="44" width="7" height="7.5" fill="#fff" stroke="#222" stroke-width="0.8"/>
<rect x="178.5" y="40" width="6.5" height="6.5" fill="#000" stroke="#bbb" stroke-width="0.8"/>
<g fill="none" stroke="#d4d4d4" stroke-width="1.4"><path d="M193.5,30.5H199.5Q202.5,30.5 202.5,33.5V37"/></g>
<path d="M192,30.5L195.5,27.5V33.5Z M202.5,39L199.5,35.5H205.5Z" fill="#d4d4d4"/>
<rect x="209.5" y="29" width="1" height="20" fill="#383838"/>
<path d="M219.5,35 Q223,30 227,32.5 T238.5,30.5" fill="none" stroke="#d4d4d4" stroke-width="1.6"/>
<g fill="#d4d4d4"><rect x="221" y="38" width="2.5" height="2"/><rect x="225" y="38" width="12" height="2"/><rect x="221" y="42" width="2.5" height="2"/><rect x="225" y="42" width="12" height="2"/><rect x="221" y="46" width="2.5" height="2"/><rect x="225" y="46" width="12" height="2"/></g>
<rect x="252" y="26" width="26" height="26" rx="2" fill="#d2d2d2"/>
<path d="M259.3,44.5 Q260.5,48.5 266,48.5 Q272,48 278.3,43.8 V46.8 Q272,50.8 265.5,50.8 Q259.5,50 259.3,44.5Z" fill="url(#swoosh)"/>
<path d="M262.1,42.3 L264.5,35 L275,26.2 L278.3,28 V31.5 L269.8,39.7Z" fill="#222"/><path d="M266,36 L276,27.5" stroke="#444" stroke-width="0.8"/>
<rect x="283.5" y="24.5" width="298" height="30" rx="3.5" fill="#3c3c3c" stroke="#2b2b2b" stroke-width="1"/>
<path d="M567.5,37.5H576.5L572,42Z" fill="#9a9a9a"/>
<path d="M604.9,29.9 L611.8,36.8 L604.9,43.5 L598,36.8Z M596.5,38.4 L602.6,44.5 L603.4,45.6 H611.1 V47 H598 L592.9,41.9Z" fill="#d4d4d4"/>
<g>
<rect x="629" y="29" width="7.2" height="7" fill="#6e6e6e"/><rect x="636.2" y="29" width="7" height="7" fill="#e6e6e6"/><rect x="643.2" y="29" width="7" height="7" fill="#6e6e6e"/>
<rect x="629" y="36" width="7.2" height="7" fill="#e6e6e6"/><rect x="636.2" y="36" width="7" height="7" fill="#7c7c7c"/><rect x="643.2" y="36" width="7" height="7" fill="#e6e6e6"/>
<rect x="629" y="43" width="7.2" height="7" fill="#6e6e6e"/><rect x="636.2" y="43" width="7" height="7" fill="#e6e6e6"/><rect x="643.2" y="43" width="7" height="7" fill="#6e6e6e"/>
</g>
<path d="M668,43 A8,8 0 0 1 679,32.5 M683,36 A8,8 0 0 1 672,46.5" fill="none" stroke="#d4d4d4" stroke-width="1.5"/>
<path d="M679.5,29.5 L682.5,34 L677,35Z M671.5,49.5 L668.5,45 L674,44Z" fill="#d4d4d4"/>

<!-- toolbox -->
<rect x="0.5" y="57.5" width="51" height="14" fill="#444" stroke="#383838"/>
<g fill="#d0d0d0" stroke="none">
<path d="M7.5,77.5 L15.5,85.5 L12,86 L14.2,90.5 L12.8,91.2 L10.5,86.8 L7.5,89.5Z"/>
<path d="M29.8,77.5H42.5V81.5H41.3L40.2,79.3H37.2V89.5H39.5V91H33V89.5H35.2V79.3H32.1L31,81.5H29.8Z"/>
</g>
<g fill="none" stroke="#d0d0d0" stroke-width="1.3">
<path d="M7,112 Q6,104 16,102.5"/>
<rect x="5" y="111.5" width="3" height="3"/><rect x="16" y="101" width="3" height="3"/><rect x="10" y="100.5" width="2.5" height="2.5"/>
</g>
<path d="M13,106 L18.5,112 L15.5,112 L14,115 Z" fill="#d0d0d0"/>
<path d="M40,102 L43,105 L37,112 Q33,114 29,115.5 Q30,111 32.5,107.5 Z" fill="#d0d0d0"/>
<path d="M32,113 L36,109" stroke="#404040" stroke-width="1"/>
<rect x="6" y="124" width="36" height="1" fill="#4b4b4b"/>
<rect x="1.5" y="127.5" width="21.5" height="21" rx="2.5" fill="#5b7791" stroke="#6f8aa3" stroke-width="1"/>
<path d="M18.5,130.5 Q20,132 17,136 L14.5,138.5 L13,137 L15.5,134.5 Q17.5,131 18.5,130.5Z M13.8,138.8 L12.5,137.5 L11.8,138.2 L13.2,139.6Z M12.8,140 L11,138.3 Q8,139 7.5,142 Q7,144 5.5,145 Q10,146 12,143.5 Q13,141.5 12.8,140Z" fill="#d8d8d8"/>
<path d="M30,143.5 L42,132" stroke="#d0d0d0" stroke-width="1.5"/>
<g fill="none" stroke="#d0d0d0" stroke-width="1.4">
<rect x="5.8" y="155.8" width="12.6" height="12.6"/>
<circle cx="36" cy="162" r="6.5"/>
<path d="M5.8,186 L10,179.8 H18.6 V186.5 L14.2,193 H5.8Z"/>
<path d="M29.5,180.5 L43,186 L30,192 L35,180"/>
<path d="M6.5,216.5 V210 Q7,204.5 12,204.5 Q17,204.5 17.5,210 V216.5"/>
<path d="M30,205 H33 Q38,203.5 40,205 Q41.5,208 40,216"/>
<path d="M6,239.5 Q14,236 17,231.5 Q19,228 12,228 L8,227.5"/>
</g>
<g fill="#d0d0d0">
<circle cx="7" cy="204.5" r="1.3"/><circle cx="12" cy="204.5" r="1.3"/><circle cx="17" cy="204.5" r="1.3"/>
<rect x="29" y="203.5" width="3" height="3"/><rect x="39" y="202.5" width="3" height="3"/><rect x="38.5" y="214" width="3" height="3"/>
<circle cx="12" cy="232" r="1"/>
<path d="M42.5,227 L35,233 L31,231 L33,234 L29.5,237 L34,235.5 L35.5,240 L37,236 L39.5,238.5 L38.5,234 Z"/>
</g>
<rect x="6" y="250" width="36" height="1" fill="#4b4b4b"/>
<g fill="none" stroke="#d0d0d0" stroke-width="1.3">
<rect x="6.2" y="258" width="12" height="12"/>
<path d="M36,257.5V271M29,264.2H43"/>
<path d="M7.5,282 V293 H19 M5,284.5 H16.5 V296"/>
<rect x="5.8" y="311.6" width="12.6" height="12.6"/>
<path d="M30.8,323.2 Q30,324.5 31.3,324.8 L37.5,318.5 L35.8,316.8 Z" stroke-width="1.1"/>
</g>
<g fill="#d0d0d0">
<circle cx="6.2" cy="258" r="1.2"/><circle cx="18.2" cy="258" r="1.2"/><circle cx="6.2" cy="270" r="1.2"/><circle cx="18.2" cy="270" r="1.2"/><circle cx="12.2" cy="258" r="1.1"/><circle cx="12.2" cy="270" r="1.1"/><circle cx="6.2" cy="264" r="1.1"/><circle cx="18.2" cy="264" r="1.1"/><circle cx="12.2" cy="264" r="1"/>
<path d="M36,256.5L33.5,259.5H38.5Z M36,272L33.5,269H38.5Z M28,264.2L31,261.7V266.7Z M44,264.2L41,261.7V266.7Z"/>
<path d="M35,315.5 L37,313.5 L38,314 L40,312 Q41.5,310 43,311.5 Q44.5,313 42.5,314.5 L40.5,316.5 L41,317.5 L39.5,319 Z"/>
</g>
<rect x="7.2" y="312.8" width="10.4" height="10.4" fill="url(#ggr)"/>
<rect x="6" y="304" width="36" height="1" fill="#4b4b4b"/>
<g fill="#d0d0d0">
<path d="M12,339 L18,337 L16,343 Z"/><circle cx="11" cy="342" r="1.5"/>
<circle cx="7" cy="341" r="0.9"/><circle cx="12" cy="336" r="0.9"/><circle cx="17" cy="347" r="0.9"/><circle cx="7" cy="346" r="0.9"/>
<path d="M29.5,345.5 L39.5,335.5 L42.3,338.3 L32.3,348.3Z M31.8,336.3 L33.8,338.3 L31.8,340.3 L29.8,338.3Z M39.3,343.1 L41.3,345.1 L39.3,347.1 L37.3,345.1Z"/>
<path d="M5,365.5 L8.5,362 L15.8,368.3 L11.5,372.5Z"/>
<path d="M17,366 Q19,369 18.5,372 Q17,370 17,366Z"/>
<path d="M32.3,366.6 H39.1 A3.4,3.4 0 0 1 32.3,366.6Z M32.6,364.2 A3.4,3.4 0 0 1 38.8,364.2Z"/>
<path d="M13,413.5 L19,419.5 L17.5,420 L15,422.5 L14.8,425 L8,418.2 L10.5,418 L13,415.5Z"/><path d="M10.8,421.5 L6,426.5 L5.5,426 Z" stroke="#d0d0d0" stroke-width="1"/>
</g>
<g fill="none" stroke="#d0d0d0" stroke-width="1.4">
<circle cx="35.7" cy="365.8" r="6.2" stroke-dasharray="2.4 1.6"/>
<path d="M5.5,389.5 L18.5,402.5 M18.5,389.5 L5.5,402.5"/>
<circle cx="12" cy="396" r="4.6"/>
<path d="M29.8,402.3 H40.5 V396.5 M29.8,402.3 L41.5,390.5"/>
<rect x="5.8" y="443.8" width="12.6" height="12.6" stroke-dasharray="3 2"/>
<circle cx="36" cy="450" r="6.3" stroke-dasharray="2.5 1.6"/>
<path d="M5.8,473.5 L10,468 H18.4 V475 L13,481 H5.8Z" stroke-dasharray="3 2"/>
<path d="M30,471 Q33,467 37,468 Q42,470 42,476 Q42,480 38,481" stroke-dasharray="2.5 1.6"/>
<path d="M7,492 L16,502 L18.5,504.5"/>
<path d="M30,494 V504.5 H42 V498 M30,491.5 H35" stroke-dasharray="2.5 1.5"/>
<path d="M6.5,516 V526 Q7,529 12,529 Q17,529 17.5,526 V516" stroke-dasharray="2.5 1.6"/>
<path d="M30,516 V528.5 H42 V521 Q40,515 35,516.5" stroke-dasharray="2.5 1.6"/>
<circle cx="9.8" cy="549.8" r="3.8" stroke-width="1.6"/>
<path d="M12.5,552.5 L18,558" stroke-width="2.2"/>
</g>
<g fill="#d0d0d0">
<path d="M12,491 L13.5,495 L17.5,493 L14.5,497 L18,499 L14,499.5 L13.5,503 L11.5,500 L8,502 L10,498.5 L6,497 L10.5,496 L8,492 L12,494 Z"/>
<path d="M32,502 L39,494.5 L41,496.5 L34,504Z M38.5,493 Q41,490 43,492 Q44.5,494 41.5,496Z"/>
<circle cx="7" cy="516" r="1.5"/><circle cx="17" cy="516" r="1.5"/><rect x="8" y="515.5" width="8" height="1"/>
<path d="M29.5,552 L32,550 L33,552 V546 Q34,545 35,546 V551 V545.5 Q36,544.5 37,545.5 V551 V546 Q38,545 39,546 V551 V547 Q40,546 41,547 V555 Q41,559 37,559 H33 Q31,558 29.5,552Z"/>
</g>
<rect x="6" y="381.5" width="36" height="1" fill="#4b4b4b"/>
<rect x="6" y="436" width="36" height="1" fill="#4b4b4b"/>
<rect x="6" y="537.5" width="36" height="1" fill="#4b4b4b"/>
<g fill="#8a8a8a"><rect x="55.5" y="356" width="1.2" height="1.2"/><rect x="55.5" y="359" width="1.2" height="1.2"/><rect x="55.5" y="362" width="1.2" height="1.2"/><rect x="55.5" y="365" width="1.2" height="1.2"/><rect x="55.5" y="368" width="1.2" height="1.2"/><rect x="55.5" y="371" width="1.2" height="1.2"/></g>
<!-- tab bar -->
<rect x="58" y="57" width="627" height="1" fill="#363636"/>
<path d="M59.5,89 V61 Q59.5,58.5 62,58.5 H685" fill="#434343" stroke="#555" stroke-width="1"/>
<rect x="57.5" y="653.5" width="628" height="1.5" fill="#2c2c2c"/>
<rect x="57.5" y="655" width="316" height="7" fill="#3a3a3a"/>
<rect x="58.5" y="655.5" width="12" height="7" fill="#434343" stroke="#4e4e4e" stroke-width="1"/>
<path d="M62.5,659 L67,655.5 V662Z" fill="#b0b0b0"/>
<rect x="374" y="655.5" width="312" height="7" rx="1.5" fill="#444" stroke="#505050" stroke-width="1"/>
</svg>

<div id="kicon" class="abs"></div><svg class="abs" style="left:71px;top:65px" width="14" height="14"><path d="M2,2 L11,11" stroke="#2a2a2a" stroke-width="2"/></svg>
<div id="title" class="abs">collab3.kra (82,2 MiB) *</div>
<div id="combo" class="abs">Normal</div>
</body></html>
